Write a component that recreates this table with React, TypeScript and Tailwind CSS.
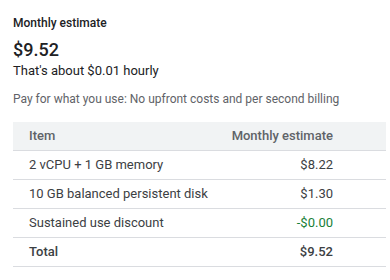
const rows = [
  { item: '2 vCPU + 1 GB memory', cost: '$8.22' },
  { item: '10 GB balanced persistent disk', cost: '$1.30' },
  { item: 'Sustained use discount', cost: '-$0.00', discount: true },
];

export default function App() {
  return (
    <div className="bg-white h-[280px] pl-[13px] pr-1 pt-[15px] font-['Roboto',sans-serif] text-[#202124]">
      <h3 className="text-[12px] font-medium leading-4">Monthly estimate</h3>
      <div className="mt-[7px] text-[18px] font-medium leading-6">$9.52</div>
      <div className="text-[13px] leading-[18px]">That's about $0.01 hourly</div>
      <p className="mt-[11px] text-[12px] leading-4 text-[#5f6368]">
        Pay for what you use: No upfront costs and per second billing
      </p>

      <table className="mt-[15px] w-full border-collapse text-[13px] text-[#3c4043]">
        <thead>
          <tr className="bg-[#f1f3f4] border-b border-[#dadce0]">
            <th className="h-[28px] pl-4 text-left font-medium text-[#5f6368]">Item</th>
            <th className="h-[28px] pr-[53px] text-right font-medium text-[#5f6368]">Monthly estimate</th>
          </tr>
        </thead>
        <tbody>
          {rows.map((r) => (
            <tr key={r.item} className="border-b border-[#dadce0]">
              <td className="h-[29px] pl-4">{r.item}</td>
              <td className={`h-[29px] pr-[53px] text-right ${r.discount ? 'text-[#188038]' : ''}`}>
                {r.cost}
              </td>
            </tr>
          ))}
          <tr className="border-b border-[#dadce0]">
            <td className="h-[29px] pl-4 font-medium">Total</td>
            <td className="h-[29px] pr-[53px] text-right font-medium">$9.52</td>
          </tr>
        </tbody>
      </table>
    </div>
  );
}
